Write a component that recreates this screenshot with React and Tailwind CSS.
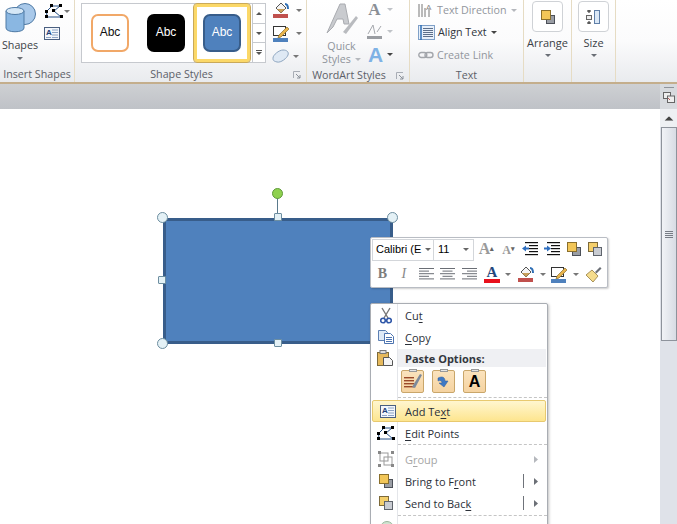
import React from "react";

const Caret = ({ c = "#6a6f76", className = "" }) => (
  <svg width="6" height="3" viewBox="0 0 6 3" className={className}><path d="M0 0h6L3 3z" fill={c} /></svg>
);

const Group = ({ w, label, launcher, children }) => (
  <div className={`${w} h-full flex flex-col border-r border-[#e6dcc4] shrink-0`}>
    <div className="h-[66px] relative flex">{children}</div>
    <div className={`h-[17px] pt-[2px] flex items-center justify-center relative text-[10.7px] text-[#5c6068] leading-none ${launcher ? "pr-[18px]" : ""}`}>
      {label}
      {launcher && (
        <svg width="8" height="8" viewBox="0 0 8 8" className="absolute right-[5px] top-[6px]">
          <path d="M0.5 7V0.5H7" stroke="#a8adb5" fill="none" /><path d="M3 3l4 4M7 4v3H4" stroke="#8a9099" fill="none" />
        </svg>
      )}
    </div>
  </div>
);

const Swatch = ({ cls, text }) => (
  <div className={`w-[38px] h-[38px] rounded-[7px] flex items-center justify-center text-[12px] pb-[3px] font-['Liberation_Sans'] ${cls} ${text}`}>Abc</div>
);

const FrontIcon = ({ flip }) => (
  <svg width="16" height="16" viewBox="0 0 16 16">
    {flip ? (
      <>
        <rect x="1.5" y="1.5" width="9" height="9" fill="#f4cf6b" stroke="#7d6a3a" />
        <rect x="6.5" y="6.5" width="8" height="8" fill="#c9ccd2" stroke="#5f646c" />
      </>
    ) : (
      <>
        <rect x="6.5" y="6.5" width="8" height="8" fill="#9a9ea5" stroke="#4c5058" />
        <rect x="1.5" y="1.5" width="9" height="9" fill="#f2c658" stroke="#8a6f2c" />
      </>
    )}
  </svg>
);

const Fill = ({ bar = "#c0504d" }) => (
  <svg width="18" height="16" viewBox="0 0 18 16">
    <path d="M4 6l5-5 5 5-5 5z" fill="#f4f4f4" stroke="#555" />
    <path d="M5 7h8l-4 4z" fill="#c9a05a" />
    <path d="M13 2c2 0 3 2 3 5" stroke="#2f6fb5" strokeWidth="2" fill="none" />
    <rect x="1" y="12" width="15" height="4" fill={bar} />
  </svg>
);

const Pen = ({ bar = "#4f81bd" }) => (
  <svg width="18" height="17" viewBox="0 0 18 17">
    <rect x="1.5" y="1.5" width="12" height="9" fill="#fff" stroke="#333" />
    <path d="M7 10l8-8 2 2-8 8-3 1z" fill="#e9b44c" stroke="#8a6f2c" strokeWidth=".7" />
    <rect x="1" y="13" width="15" height="4" fill={bar} />
  </svg>
);

const AlignLines = ({ mode }) => {
  const rows = [0, 1, 2, 3, 4];
  return (
    <svg width="15" height="12" viewBox="0 0 15 12">
      {rows.map((r) => {
        const short = r % 2 === 1;
        const w = short ? 10 : 15;
        const x = mode === "l" ? 0 : mode === "c" ? (15 - w) / 2 : 15 - w;
        return <rect key={r} x={x} y={r * 2.6} width={w} height="1" fill="#6a6e75" />;
      })}
    </svg>
  );
};

const Indent = ({ out }) => (
  <svg width="17" height="16" viewBox="0 0 17 16">
    {[1, 4, 7, 10, 13].map((y, i) => <rect key={y} x={i === 0 || i === 4 ? 3 : 7} y={y} width={i === 0 || i === 4 ? 13 : 9} height="1.2" fill="#111" />)}
    <path d={out ? "M0 7.5L4 4.5v2h3v2H4v2z" : "M7 7.5L3 4.5v2H0v2h3v2z"} fill="#2f6fc0" />
  </svg>
);

const EditPts = () => (
  <svg width="20" height="15" viewBox="0 0 20 15">
    <path d="M2.5 7.5L8 2h8l-6 5 7 6H3z" fill="none" stroke="#244f86" />
    {[[1, 6], [6, 0], [15, 0], [8, 5], [16, 11], [1, 11]].map(([x, y], i) => <rect key={i} x={x} y={y} width="3" height="3" fill="#000" />)}
  </svg>
);

const TextBoxIcon = () => (
  <svg width="16" height="13" viewBox="0 0 16 13">
    <rect x=".5" y=".5" width="15" height="12" fill="#f3f6fb" stroke="#4a5f80" />
    <text x="2" y="8" fontSize="8" fontWeight="700" fill="#1f3f77" fontFamily="Liberation Sans">A</text>
    {[2.5, 5, 7.5, 10].map((y) => <rect key={y} x="8" y={y} width="6" height="1" fill="#8ea4c4" />)}
    <rect x="2" y="10" width="5" height="1" fill="#8ea4c4" />
  </svg>
);

const MenuItem = ({ icon, label, disabled, active, arrow, bar }) => (
  <div className={`h-[22px] flex items-center relative ${active ? "mx-[1px] border border-[#e8c96f] rounded-[2px] bg-gradient-to-b from-[#fff6cf] to-[#fde58e]" : ""}`}>
    <div className={`${active ? "w-[30px]" : "w-[27px] ml-[1px]"} shrink-0 flex justify-center`}>{icon}</div>
    <div className={`${active ? "ml-[2px]" : "ml-[6px]"} text-[11px] leading-none ${disabled ? "text-[#a6a6a6]" : "text-[#2b3038]"}`}>{label}</div>
    {bar && <div className="absolute left-[152px] top-[4px] w-px h-[14px] bg-[#6f737a]" />}
    {arrow && <svg width="4" height="7" viewBox="0 0 4 7" className="absolute left-[163px] top-[8px]"><path d="M0 0l4 3.5L0 7z" fill={disabled ? "#b5b8bd" : "#6b6f76"} /></svg>}
  </div>
);

const Sep = () => <div className="ml-[27px] border-t border-dashed border-[#c5c5c5] h-px" />;

const U = ({ children }) => <span className="underline underline-offset-2">{children}</span>;

const Handle = ({ cls, round }) => (
  <div className={`absolute ${cls} ${round ? "w-[11px] h-[11px] rounded-full" : "w-[8px] h-[8px] rounded-[1px]"} border border-[#6d8ea0] bg-[#e4f1f6]`} />
);

const Paste = ({ children }) => (
  <div className="w-[23px] h-[23px] rounded-[2px] border border-[#c9a66a] bg-gradient-to-b from-[#fbe3bd] to-[#f5d3a1] flex items-center justify-center relative">
    <div className="absolute -top-[2px] left-[7px] w-[8px] h-[3px] bg-[#e6e6e6] border border-[#999]" />
    {children}
  </div>
);

export default function App() {
  return (
    <div className="w-[677px] h-[524px] overflow-hidden relative flex flex-col bg-white font-['Open_Sans',sans-serif]">
      {/* Ribbon */}
      <div className="h-[84px] shrink-0 flex border-b-[2px] border-[#c4ae8c] bg-gradient-to-b from-[#ffffff] via-[#fbfbfc] to-[#e9ebee]">
        <Group w="w-[75px]" label="Insert Shapes">
          <div className="w-[40px] flex flex-col items-center pt-[2px]">
            <svg width="31" height="32" viewBox="0 0 31 32">
              <circle cx="20" cy="12" r="10.5" fill="#a9c9ea" stroke="#4f7aa5" />
              <path d="M1 9v17c0 5 18 5 18 0V9z" fill="#8ab7e2" stroke="#4f7aa5" />
              <ellipse cx="10" cy="9" rx="9" ry="3.5" fill="#d5e7f6" stroke="#4f7aa5" />
            </svg>
            <div className="text-[10.7px] leading-none text-[#3b3f46] mt-[6px]">Shapes</div>
            <Caret className="mt-[6px]" />
          </div>
          <div className="flex flex-col pt-[3px] pl-[4px]">
            <div className="flex items-center gap-[1px] h-[16px]"><EditPts /><Caret c="#777" className="-ml-[1px]" /></div>
            <div className="mt-[8px]"><TextBoxIcon /></div>
          </div>
        </Group>

        <Group w="w-[232px]" label="Shape Styles" launcher>
          <div className="ml-[6px] mt-[3px] w-[185px] h-[60px] border border-[#c6c9ce] bg-white flex">
            <div className="w-[170px] flex items-center">
              <div className="ml-[9px]"><Swatch cls="bg-white border-[2.5px] border-[#f1a868]" text="text-[#111]" /></div>
              <div className="ml-[18px]"><Swatch cls="bg-black" text="text-white" /></div>
              <div className="ml-[9px] w-[56px] h-[58px] border-[3px] border-[#fbd868] rounded-[3px] bg-white outline outline-1 outline-[#c9a95a] flex items-center justify-center">
                <Swatch cls="bg-[#4f81bd] border-[2.5px] border-[#385d8a]" text="text-white" />
              </div>
            </div>
            <div className="flex-1 border-l border-[#c6c9ce] flex flex-col">
              <div className="flex-1 flex items-center justify-center border-b border-[#c6c9ce]"><Caret c="#555" className="rotate-180" /></div>
              <div className="flex-1 flex items-center justify-center border-b border-[#c6c9ce]"><Caret c="#555" /></div>
              <div className="flex-1 flex flex-col items-center justify-center gap-[1px]"><div className="w-[6px] h-px bg-[#555]" /><Caret c="#555" /></div>
            </div>
          </div>
          <div className="ml-[6px] pt-[2px] flex flex-col gap-[7px]">
            <div className="flex items-center gap-[6px]"><Fill /><Caret c="#777" /></div>
            <div className="flex items-center gap-[6px]"><Pen /><Caret c="#777" /></div>
            <div className="flex items-center gap-[3px]">
              <svg width="18" height="15" viewBox="0 0 18 15"><path d="M1 9c0-3 6-8 10-8s6 2 5 5-7 8-11 7-4-2-4-4z" fill="#dfe9f4" stroke="#8ea6c0" /></svg>
              <Caret c="#777" />
            </div>
          </div>
        </Group>

        <Group w="w-[103px]" label="WordArt Styles" launcher>
          <div className="w-[69px] flex flex-col items-center pt-[2px] text-[#8f949b] text-[10.7px] leading-none">
            <svg width="34" height="33" viewBox="0 0 34 33">
              <path d="M2 31L15 2h5l4 20-5 0-1-5h-6l-4 8z" fill="#c9cbcf" stroke="#a9abb0" />
              <path d="M18 30l13-16 2 2-12 16z" fill="#b9bbbf" />
            </svg>
            <div className="mt-[6px]">Quick</div>
            <div className="mt-[2px] flex items-center gap-[4px]">Styles<Caret c="#b5b8bd" /></div>
          </div>
          <div className="-ml-[9px] pt-0 flex flex-col">
            <div className="h-[20px] flex items-center gap-[5px]"><span className="w-[15px] text-center text-[17px] leading-none font-bold text-[#8a8f96] font-['Liberation_Serif']">A</span><Caret c="#c0c3c8" /></div>
            <div className="h-[24px] flex items-center gap-[5px]">
              <svg width="15" height="16" viewBox="0 0 15 16"><path d="M1 11L6 2l2 9M10 9l4-6" stroke="#a5a8ad" fill="none" /><rect y="13" width="15" height="3" fill="#9a9da2" /></svg>
              <Caret c="#c0c3c8" />
            </div>
            <div className="h-[24px] flex items-center gap-[3px]"><span className="w-[17px] text-center text-[21px] leading-none font-bold text-[#7fb2e5] font-['Liberation_Sans']">A</span><Caret c="#444" /></div>
          </div>
        </Group>

        <Group w="w-[114px]" label="Text">
          <div className="pl-[8px] flex flex-col text-[10.7px] leading-none">
            <div className="h-[21px] flex items-center text-[#92969d]">
              <svg width="15" height="15" viewBox="0 0 15 15" className="mr-[4px]"><path d="M1 1v13M4 1v13M7 5v9M11 6v8" stroke="#777" fill="none" /><text x="8" y="7" fontSize="8" fill="#888" fontFamily="Liberation Sans">A</text></svg>
              Text Direction<Caret c="#b5b8bd" className="ml-[4px]" />
            </div>
            <div className="h-[23px] flex items-center text-[#30343b]">
              <svg width="17" height="17" viewBox="0 0 17 17" className="mr-[3px]"><rect x=".5" y="1.5" width="16" height="14" fill="#e8f0fa" stroke="#7fa0c8" />{[4, 6, 8, 10, 12].map((y) => <rect key={y} x="5" y={y} width="10" height="1" fill="#5d6f8a" />)}<path d="M3 1v15" stroke="#2f6fb5" strokeWidth="1.5" /></svg>
              Align Text<Caret c="#444" className="ml-[4px]" />
            </div>
            <div className="h-[22px] flex items-center text-[#92969d]">
              <svg width="16" height="8" viewBox="0 0 16 8" className="mr-[3px]"><rect x=".8" y="1.5" width="8" height="5" rx="2.5" fill="none" stroke="#a3a6ab" strokeWidth="1.4" /><rect x="7" y="1.5" width="8" height="5" rx="2.5" fill="none" stroke="#a3a6ab" strokeWidth="1.4" /></svg>
              Create Link
            </div>
          </div>
        </Group>

        <Group w="w-[48px]" label="">
          <div className="w-full flex flex-col items-center pt-[1px]">
            <div className="w-[31px] h-[31px] rounded-[4px] border border-[#cfd2d6] bg-white flex items-center justify-center"><FrontIcon /></div>
            <div className="text-[11px] leading-none text-[#3b3f46] mt-[5px]">Arrange</div>
            <Caret className="mt-[6px]" />
          </div>
        </Group>

        <Group w="w-[44px]" label="">
          <div className="w-full flex flex-col items-center pt-[1px]">
            <div className="w-[31px] h-[31px] rounded-[4px] border border-[#cfd2d6] bg-white flex items-center justify-center">
              <svg width="15" height="16" viewBox="0 0 15 16"><rect x="8.5" y="1.5" width="5" height="13" fill="#dbe8f6" stroke="#5f7fa8" /><path d="M3 1v3M3 12v3M1 2h4M1 14h4" stroke="#222" /><rect x=".5" y="6.5" width="5" height="4" fill="#eee" stroke="#666" /></svg>
            </div>
            <div className="text-[11px] leading-none text-[#3b3f46] mt-[5px]">Size</div>
            <Caret className="mt-[6px]" />
          </div>
        </Group>
      </div>

      {/* Document band */}
      <div className="h-[25px] shrink-0 bg-gradient-to-b from-[#ced0d3] to-[#bfc2c7] flex justify-end">
        <div className="w-[17px] h-full bg-[#d7dade] flex flex-col items-center pt-[3px]">
          <div className="w-[10px] h-px bg-[#8f949b]" />
          <svg width="12" height="11" viewBox="0 0 12 11" className="mt-[4px]"><rect x=".5" y=".5" width="7" height="6" fill="#eee" stroke="#666" /><rect x="4.5" y="4" width="7" height="6.5" fill="#eee" stroke="#666" /><path d="M5 6l2 2" stroke="#c05a5a" /></svg>
        </div>
      </div>

      {/* Document */}
      <div className="flex-1 flex relative min-h-0">
        <div className="flex-1 bg-white" />
        <div className="w-[17px] bg-[#dfe2e9] flex flex-col items-center">
          <div className="w-full h-[18px] bg-[#eef0f3] flex items-center justify-center"><Caret c="#444" className="rotate-180 scale-150" /></div>
          <div className="w-[16px] h-[214px] border border-[#8e939c] bg-gradient-to-r from-[#f1f3f7] to-[#d8dce4] flex flex-col items-center justify-center gap-[1px]">
            {[0, 1, 2, 3].map((i) => <div key={i} className="w-[8px] h-px bg-[#777c85]" />)}
          </div>
        </div>
      </div>

      {/* Shape on canvas */}
      <div className="absolute left-[163px] top-[218px] w-[230px] h-[126px] bg-[#4f81bd] border-[3px] border-[#385d8a]" />
      <div className="absolute left-[277px] top-[198px] w-px h-[17px] bg-[#5a7a8c]" />
      <div className="absolute left-[272px] top-[188px] w-[11px] h-[11px] rounded-full bg-[#8fd14f] border border-[#5f9a3a]" />
      <Handle round cls="left-[157px] top-[212px]" />
      <Handle cls="left-[274px] top-[213px]" />
      <Handle round cls="left-[387px] top-[212px]" />
      <Handle cls="left-[158px] top-[276px]" />
      <Handle round cls="left-[157px] top-[338px]" />
      <Handle cls="left-[274px] top-[339px]" />

      {/* Mini toolbar */}
      <div className="absolute left-[370px] top-[237px] w-[238px] h-[51px] bg-white border border-[#b9bdc4] rounded-[2px] shadow-[1px_1px_2px_rgba(0,0,0,0.2)] flex flex-col pl-[1px] pt-[1px]">
        <div className="h-[22px] flex items-center">
          <div className="w-[62px] h-[22px] pb-[1px] border border-[#d3d6da] flex items-center text-[11px] text-black pl-[3px] whitespace-nowrap overflow-hidden font-['Liberation_Sans']">Calibri (E<Caret c="#666" className="ml-[4px]" /></div>
          <div className="w-[40px] h-[22px] pb-[1px] border border-l-0 border-[#d3d6da] flex items-center justify-between text-[11px] text-black px-[4px] font-['Liberation_Sans']">11<Caret c="#666" /></div>
          <div className="w-[23px] ml-[1px] -mt-[2px] text-center text-[16px] font-bold text-[#9a9a9a] font-['Liberation_Serif'] leading-none">A<sup className="text-[7px] text-[#666]">▴</sup></div>
          <div className="w-[21px] text-center text-[12px] font-bold text-[#9a9a9a] font-['Liberation_Serif'] leading-none">A<sup className="text-[7px] text-[#666]">▾</sup></div>
          <div className="w-[23px] -mt-[2px] flex justify-center"><Indent out /></div>
          <div className="w-[21px] -mt-[2px] flex justify-center"><Indent /></div>
          <div className="w-[21px] -mt-[2px] flex justify-center"><FrontIcon /></div>
          <div className="w-[22px] -mt-[2px] flex justify-center"><FrontIcon flip /></div>
        </div>
        <div className="h-[24px] mt-[1px] flex items-center">
          <div className="w-[21px] text-center text-[14px] font-bold text-[#7d7d7d] font-['Liberation_Serif'] leading-none">B</div>
          <div className="w-[23px] text-center text-[14px] italic text-[#8a8a8a] font-['Liberation_Serif'] leading-none">I</div>
          <div className="w-[22px] flex justify-center"><AlignLines mode="l" /></div>
          <div className="w-[22px] flex justify-center"><AlignLines mode="c" /></div>
          <div className="w-[22px] flex justify-center"><AlignLines mode="r" /></div>
          <div className="w-[22px] flex flex-col items-center ml-[1px]">
            <span className="text-[15px] leading-[13px] font-bold text-[#24477d] font-['Liberation_Serif']">A</span>
            <div className="w-[16px] h-[4px] bg-[#e8101c]" />
          </div>
          <div className="w-[11px] flex justify-center"><Caret c="#777" /></div>
          <div className="w-[25px] flex justify-center"><Fill /></div>
          <div className="w-[9px] flex justify-center"><Caret c="#777" /></div>
          <div className="w-[25px] flex justify-center"><Pen /></div>
          <div className="w-[9px] flex justify-center"><Caret c="#777" /></div>
          <div className="w-[27px] flex justify-center">
            <svg width="17" height="17" viewBox="0 0 17 17"><path d="M1 9l6-5 6 6-5 6z" fill="#f5dc8c" stroke="#a8925a" /><path d="M10 6l5-5 1.5 1.5-5 5z" fill="#6b6f76" /></svg>
          </div>
        </div>
      </div>

      {/* Context menu */}
      <div className="absolute left-[370px] top-[303px] w-[178px] h-[230px] bg-white border border-[#a9adb3] rounded-[2px] shadow-[1px_1px_3px_rgba(0,0,0,0.25)]">
        <div className="absolute left-[26px] top-0 bottom-0 w-px bg-[#e4e6ea]" />
        <div className="relative flex flex-col">
          <MenuItem label={<>Cu<U>t</U></>} icon={<svg width="12" height="17" viewBox="0 0 12 17"><path d="M2 1l6 10M10 1L4 11" stroke="#777" strokeWidth="1.4" /><circle cx="3" cy="13.5" r="2.3" fill="none" stroke="#2f57a8" strokeWidth="1.6" /><circle cx="9" cy="13.5" r="2.3" fill="none" stroke="#2f57a8" strokeWidth="1.6" /></svg>} />
          <MenuItem label={<><U>C</U>opy</>} icon={<svg width="16" height="14" viewBox="0 0 16 14"><path d="M.5.5h7l2 2v8h-9z" fill="#dfeaf7" stroke="#5b7fb3" /><path d="M6.5 3.5h6l3 3v7h-9z" fill="#fff" stroke="#4d74b0" />{[7, 9, 11].map((y) => <rect key={y} x="8" y={y} width="6" height="1" fill="#4d74b0" />)}</svg>} />
          <div className="flex items-center h-[18px] mt-[1px] relative">
            <div className="w-[28px] flex justify-center shrink-0">
              <svg width="16" height="16" viewBox="0 0 16 16"><rect x=".5" y="2.5" width="11" height="13" fill="#e6b95c" stroke="#7d6a3a" /><rect x="3" y=".5" width="6" height="3" fill="#ddd" stroke="#777" /><path d="M6.5 7.5h6l3 3v5h-9z" fill="#f4f4f4" stroke="#555" /></svg>
            </div>
            <div className="flex-1 mr-[1px] ml-[-1px] h-full bg-[#eff0f3] flex items-center pl-[7px] text-[11px] font-bold text-[#33373e] leading-none">Paste Options:</div>
          </div>
          <div className="ml-[30px] h-[30px] flex gap-[7px] pt-[3px]">
            <Paste>
              <svg width="19" height="17" viewBox="0 0 19 17">{[4, 7, 10, 13].map((y) => <rect key={y} x="1" y={y} width="10" height="1.4" fill="#9b4a2a" />)}<path d="M9 14l8-13 2 1-7 13z" fill="#7d8a9b" /></svg>
            </Paste>
            <div className="ml-[1px]"><Paste>
              <svg width="13" height="13" viewBox="0 0 13 13"><path d="M1 3c4-2 7-1 7 3h3l-4 6-5-4h3c0-2-2-3-4-2z" fill="#3f79c4" stroke="#2a5a9c" strokeWidth=".5" /></svg>
            </Paste></div>
            <div className="ml-[1px]"><Paste><span className="text-[16px] leading-none font-bold text-black font-['Liberation_Sans'] mt-[1px]">A</span></Paste></div>
          </div>
          <Sep />
          <div className="mt-[2px]"><MenuItem active label={<>Add Te<U>x</U>t</>} icon={<TextBoxIcon />} /></div>
          <MenuItem label={<><U>E</U>dit Points</>} icon={<EditPts />} />
          <div className="h-[2px]"><Sep /></div>
          <div className="mt-[2px]"><MenuItem disabled arrow label={<>G<U>r</U>oup</>} icon={
            <svg width="16" height="16" viewBox="0 0 16 16"><rect x="2" y="2" width="8" height="8" fill="none" stroke="#999" /><rect x="6" y="6" width="8" height="8" fill="none" stroke="#999" />{[[0, 0], [13, 0], [0, 13], [13, 13]].map(([x, y], i) => <rect key={i} x={x} y={y} width="3" height="3" fill="#888" />)}</svg>
          } /></div>
          <MenuItem arrow bar label={<>Bring to F<U>r</U>ont</>} icon={<FrontIcon />} />
          <MenuItem arrow bar label={<>Send to Bac<U>k</U></>} icon={<FrontIcon flip />} />
          <div className="h-[2px] mt-[1px]"><Sep /></div>
          <div className="ml-[9px] mt-[4px] w-[14px] h-[14px] rounded-full bg-[#cfe3d0] border border-[#9ab59c]" />
        </div>
      </div>
    </div>
  );
}
